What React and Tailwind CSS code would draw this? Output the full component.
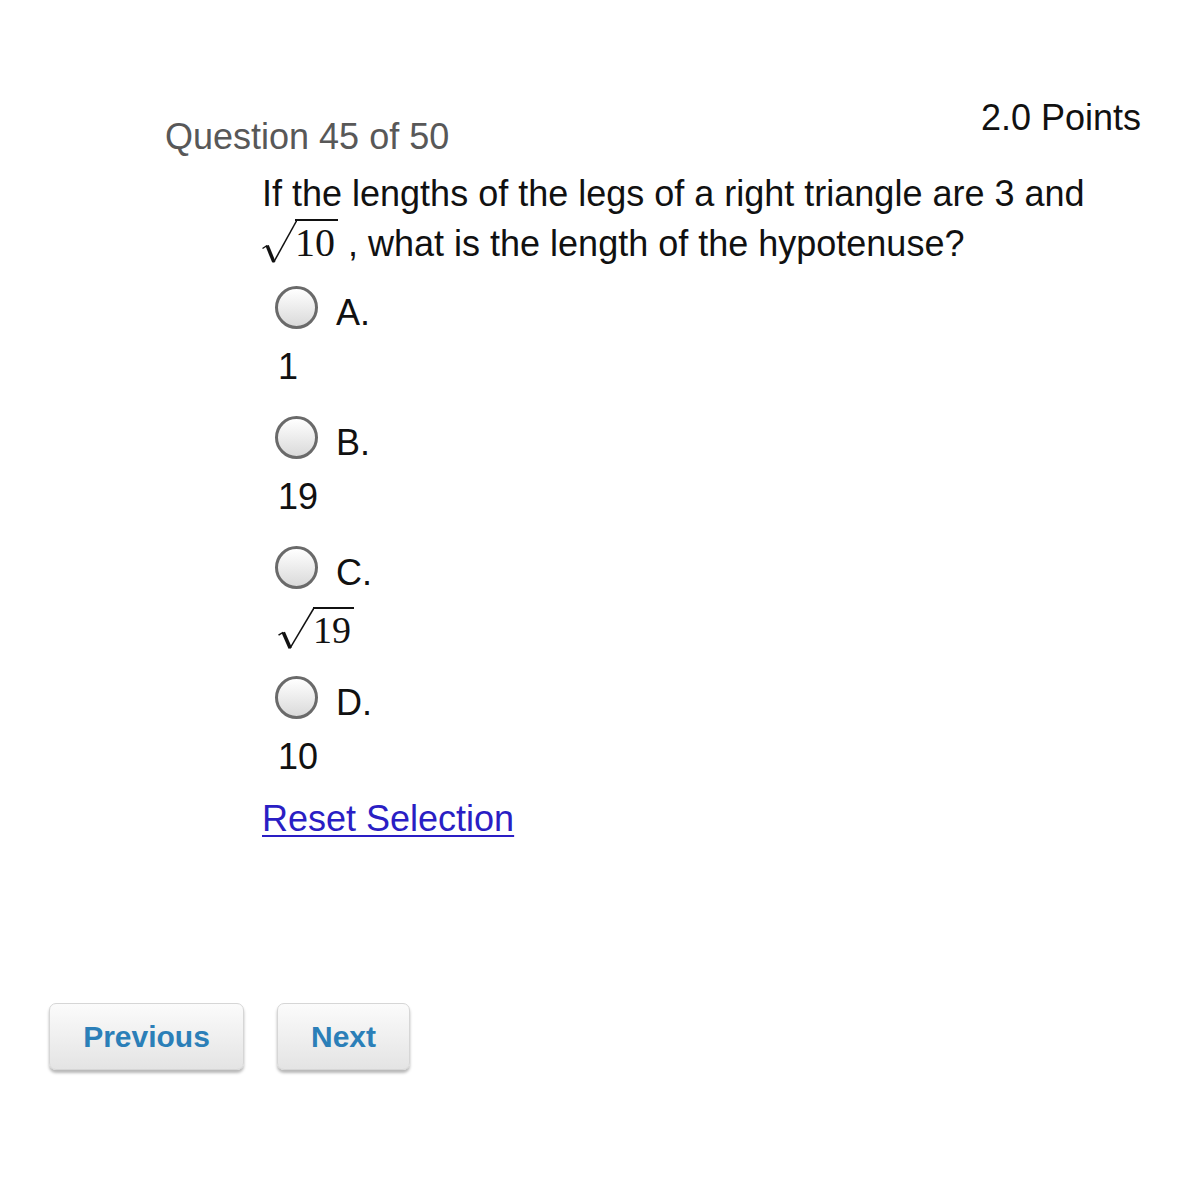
import React from 'react';

// typeset-style radical: thin tick, heavy downstroke, thin upstroke, overline from border
const Sqrt = ({ children, small = false }) => (
  <span className={`relative inline-flex ${small ? 'pl-[35px] align-[-4px]' : 'pl-[33px]'}`}>
    <svg
      viewBox="0 0 34 44"
      preserveAspectRatio="none"
      className={`absolute left-0 top-0 h-full ${small ? 'w-[36px]' : 'w-[35px]'}`}
    >
      <path d="M0.5 29.5 L5 26.5" fill="none" stroke="#111" strokeWidth="1.4" />
      <path d="M5 26.5 L11.5 43" fill="none" stroke="#111" strokeWidth="3.4" />
      <path d="M11.2 43.5 L34 1" fill="none" stroke="#111" strokeWidth="1.5" />
    </svg>
    <span
      className={`block border-t-2 border-[#111] pt-[2px] pr-[3px] font-['Liberation_Serif','Times_New_Roman',serif] ${
        small ? 'text-[38px] leading-[38px]' : 'text-[40px] leading-[40px]'
      }`}
    >
      {children}
    </span>
  </span>
);

const Radio = () => (
  <span className="mt-[4px] inline-block h-[43px] w-[43px] shrink-0 rounded-full border-[3px] border-[#6a6a6a] bg-gradient-to-b from-white to-[#dadada]" />
);

const Option = ({ letter, children }) => (
  <div className="mb-[17px]">
    <label className="flex h-[50px] items-start gap-[18px] pl-[13px]">
      <Radio />
      <span className="mt-[6px] text-[36px] leading-[50px]">{letter}</span>
    </label>
    <div className="mt-[7px] h-[56px] pl-[16px] text-[36px] leading-[56px]">{children}</div>
  </div>
);

const NavButton = ({ children, className = '' }) => (
  <button
    className={`h-[67px] rounded-[7px] border border-[#d6d6d6] bg-gradient-to-b from-[#fbfbfb] to-[#e4e4e4] text-[30px] font-bold text-[#2b7fb8] shadow-[0_3px_3px_rgba(0,0,0,0.28)] ${className}`}
  >
    {children}
  </button>
);

export default function App() {
  return (
    <div className="min-h-[1200px] w-[1198px] bg-white font-['Liberation_Sans',Arial,sans-serif] text-[#111]">
      <div className="flex items-start justify-between pt-[98px] pr-[57px]">
        <div className="pl-[165px] pt-[19px] text-[36px] leading-[40px] text-[#585858]">Question 45 of 50</div>
        <div className="text-[36px] leading-[40px]">2.0 Points</div>
      </div>

      <div className="pl-[262px] pt-[12px]">
        <div className="w-[900px] text-[36px] leading-[50px]">
          If the lengths of the legs of a right triangle are 3 and
          <br />
          <Sqrt>10</Sqrt> , what is the length of the hypotenuse?
        </div>

        <div className="mt-[13px]">
          <Option letter="A.">1</Option>
          <Option letter="B.">19</Option>
          <Option letter="C.">
            <Sqrt small>19</Sqrt>
          </Option>
          <Option letter="D.">10</Option>
        </div>

        <a
          href="#"
          className="-mt-[3px] block w-fit text-[36px] leading-[40px] text-[#2a1ec4] underline decoration-2 underline-offset-[4px]"
        >
          Reset Selection
        </a>
      </div>

      <div className="flex gap-[33px] pl-[49px] pt-[164px]">
        <NavButton className="w-[195px]">Previous</NavButton>
        <NavButton className="w-[133px]">Next</NavButton>
      </div>
    </div>
  );
}
